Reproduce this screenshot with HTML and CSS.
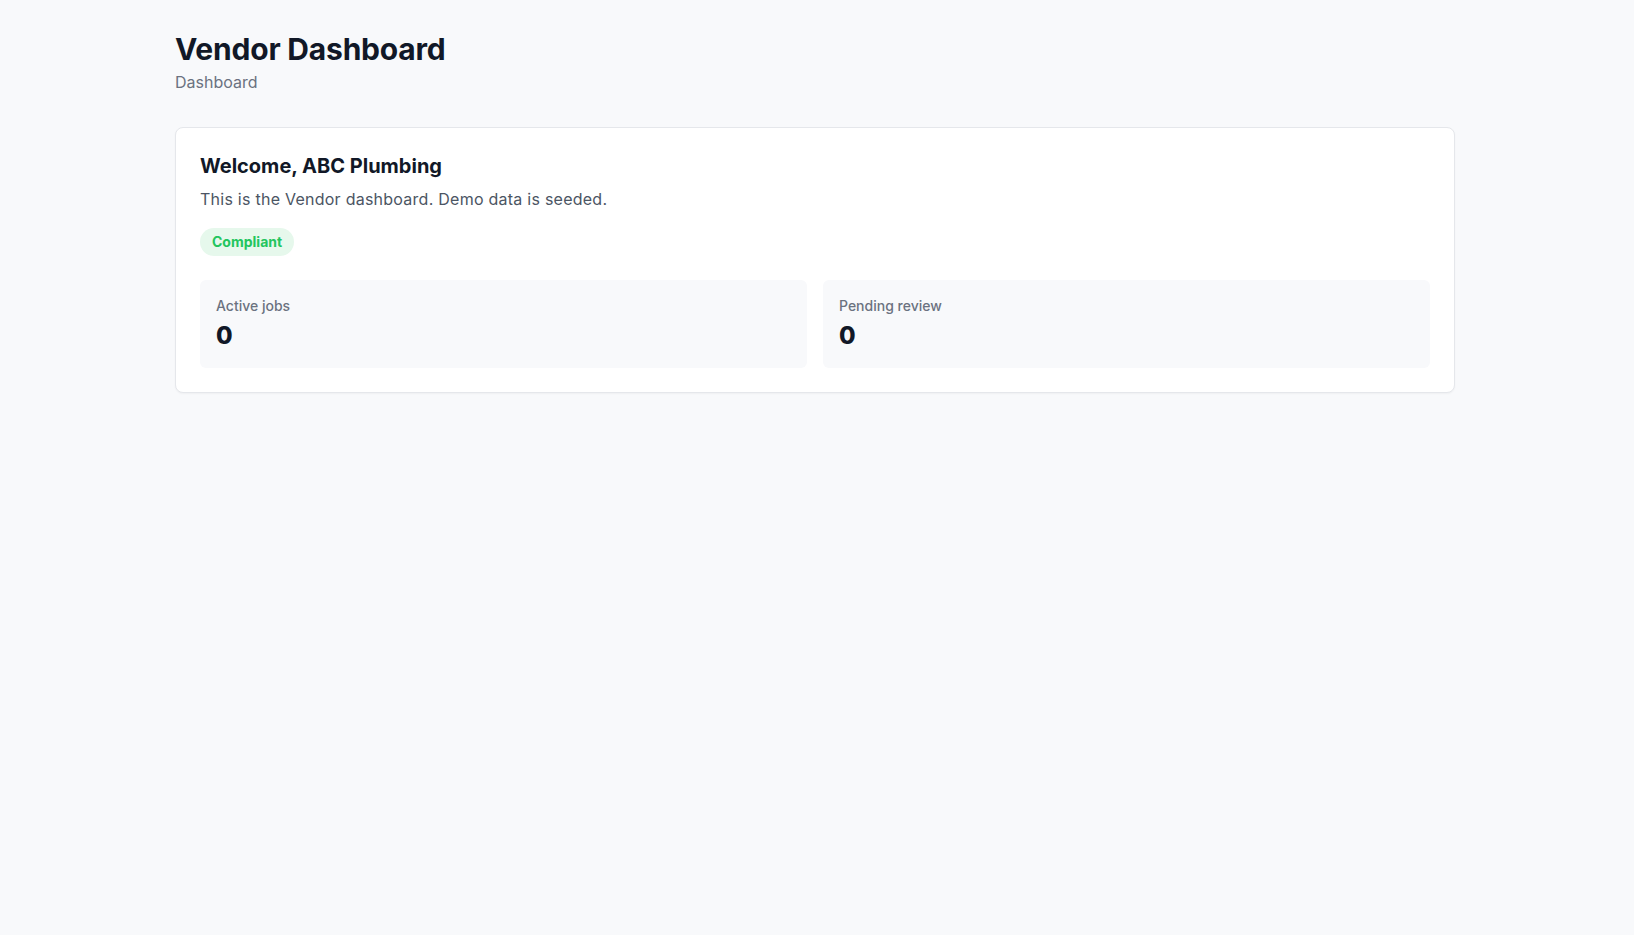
FILE: index.html
```html
<!DOCTYPE html>
<html lang="en">
<head>
    <meta charset="UTF-8">
    <meta name="viewport" content="width=device-width, initial-scale=1.0">
    <title>Vendor Dashboard</title>
    <link rel="stylesheet" href="styles.css">
</head>
<body>
    <div class="container">
        <header class="page-header">
            <h1>Vendor Dashboard</h1>
            <div class="crumb">Dashboard</div>
        </header>

        <section class="card">
            <h2>Welcome, ABC Plumbing</h2>
            <p class="intro">This is the Vendor dashboard. Demo data is seeded.</p>
            <span class="badge badge-ok">Compliant</span>

            <div class="stats">
                <div class="stat">
                    <div class="stat-label">Active jobs</div>
                    <div class="stat-value">0</div>
                </div>
                <div class="stat">
                    <div class="stat-label">Pending review</div>
                    <div class="stat-value">0</div>
                </div>
            </div>
        </section>
    </div>
</body>
</html>
```

FILE: styles.css
```css
body {
    margin: 0;
    background: #f8f9fb;
    font-family: Inter, "Noto Sans", sans-serif;
    color: #111827;
}
.container {
    max-width: 1280px;
    margin: 0 auto;
    padding: 31px 4px 31px 0;
}
.page-header h1 {
    margin: 0;
    font-size: 30px;
    line-height: 36px;
    font-weight: 700;
    letter-spacing: -0.2px;
}
.crumb {
    margin-top: 3px;
    font-size: 16px;
    line-height: 24px;
    color: #6b7280;
}
.card {
    margin-top: 33px;
    background: #fff;
    border: 1px solid #e5e7eb;
    border-radius: 8px;
    box-shadow: 0 1px 2px rgba(0, 0, 0, 0.04);
    padding: 24px;
}
.card h2 {
    margin: 0;
    font-size: 20px;
    line-height: 28px;
    font-weight: 700;
}
.intro {
    margin: 7px 0 17px;
    font-size: 16px;
    line-height: 24px;
    letter-spacing: 0.25px;
    color: #4b5563;
}
.badge {
    display: inline-block;
    padding: 4px 12px;
    border-radius: 999px;
    font-size: 14px;
    line-height: 20px;
    font-weight: 700;
}
.badge-ok {
    background: #e6f8ec;
    color: #22c55e;
}
.stats {
    display: grid;
    grid-template-columns: 1fr 1fr;
    gap: 16px;
    margin-top: 24px;
}
.stat {
    background: #f8f9fb;
    border-radius: 6px;
    padding: 16px;
}
.stat-label {
    font-size: 14px;
    line-height: 20px;
    font-weight: 500;
    color: #6b7280;
}
.stat-value {
    margin-top: 4px;
    font-size: 24px;
    line-height: 32px;
    font-weight: 800;
}
```
